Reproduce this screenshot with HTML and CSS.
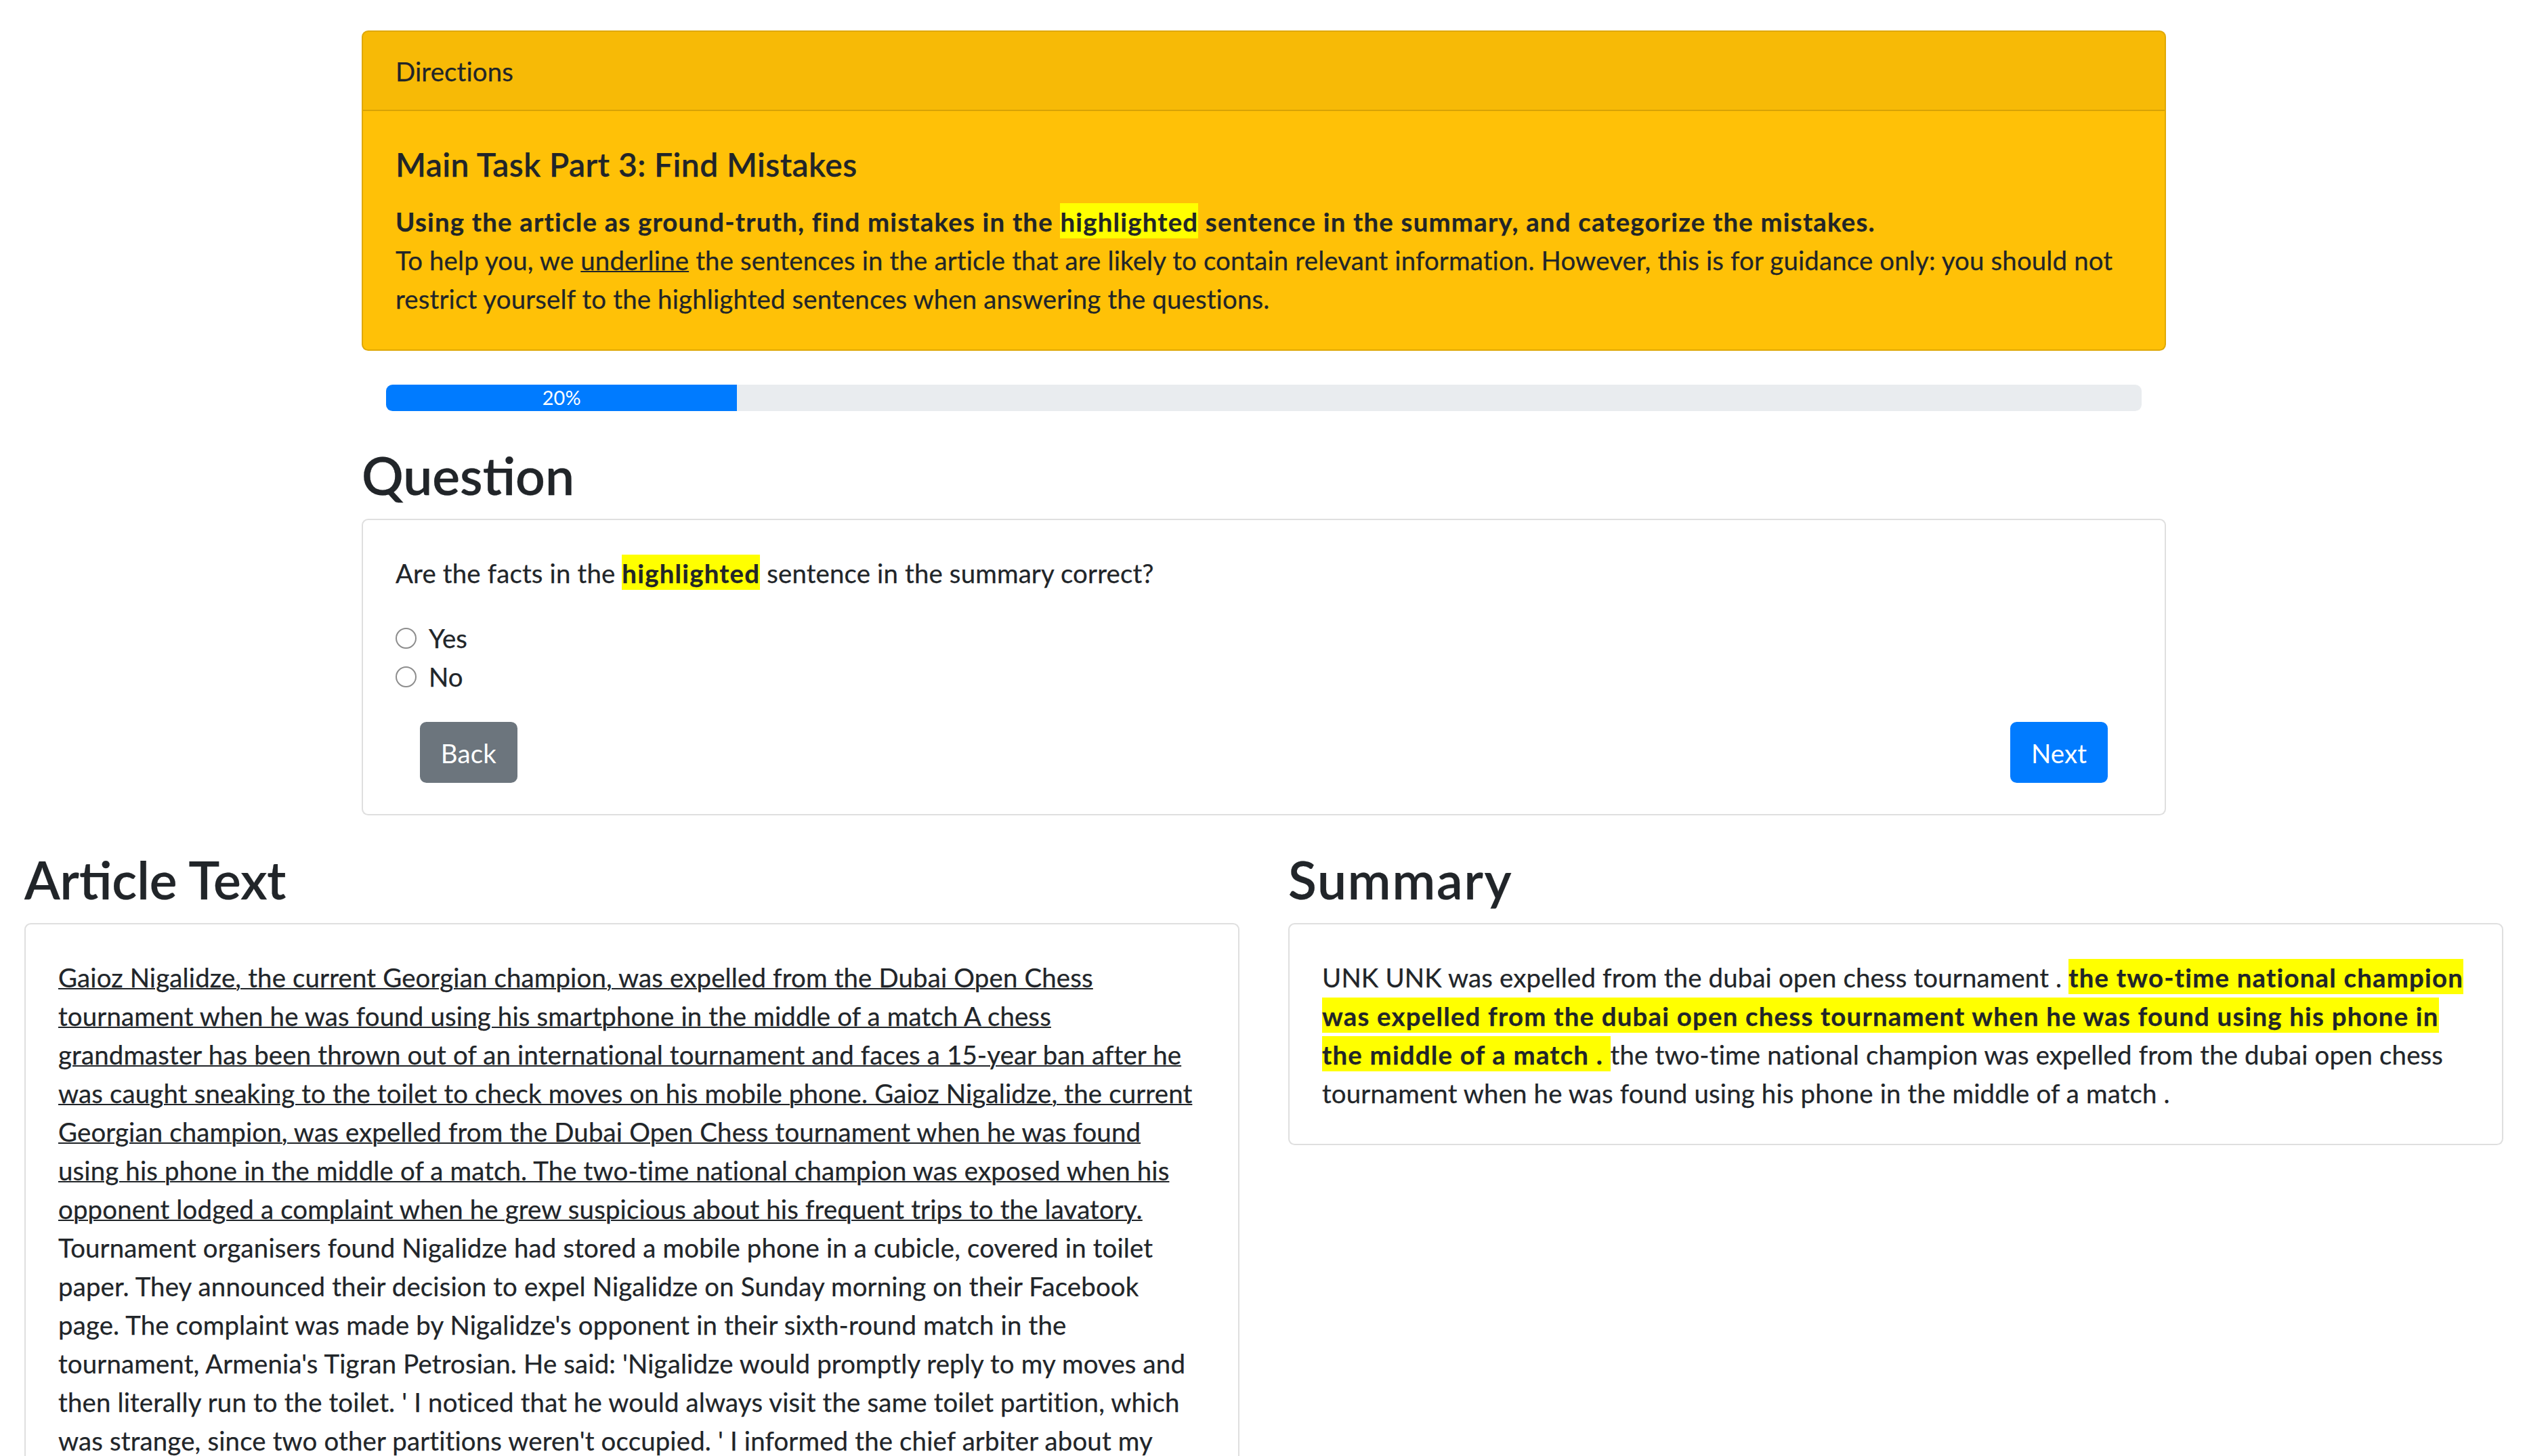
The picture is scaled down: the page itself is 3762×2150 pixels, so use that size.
FILE: index.html
```html
<!DOCTYPE html>
<html lang="en">
<head>
<meta charset="utf-8">
<title>Main Task Part 3: Find Mistakes</title>
<link rel="stylesheet" href="styles.css">
</head>
<body>
<div class="page">
  <div class="container">
    <div class="card card-warning">
      <div class="card-header">Directions</div>
      <div class="card-body">
        <h5 class="card-title">Main Task Part 3: Find Mistakes</h5>
        <p class="lead-bold">Using the article as ground-truth, find mistakes in the <span class="hl">highlighted</span> sentence in the summary, and categorize the mistakes.</p>
        <p class="nowrap">To help you, we <span class="u">underline</span> the sentences in the article that are likely to contain relevant information. However, this is for guidance only: you should not<br>restrict yourself to the highlighted sentences when answering the questions.</p>
      </div>
    </div>

    <div class="progress">
      <div class="progress-bar" style="width: 20%">20%</div>
    </div>

    <h2>Question</h2>
    <div class="card">
      <div class="card-body">
        <p class="q-text">Are the facts in the <span class="hl">highlighted</span> sentence in the summary correct?</p>
        <div class="options">
          <label class="form-check"><input class="radio" type="radio" name="answer" value="yes"><span>Yes</span></label>
          <label class="form-check"><input class="radio" type="radio" name="answer" value="no"><span>No</span></label>
        </div>
        <div class="actions">
          <button class="btn btn-secondary" type="button">Back</button>
          <button class="btn btn-primary" type="button">Next</button>
        </div>
      </div>
    </div>
  </div>

  <div class="panels">
    <section class="panel">
      <h2>Article Text</h2>
      <div class="card">
        <div class="card-body">
          <p class="nowrap"><span class="u">Gaioz Nigalidze, the current Georgian champion, was expelled from the Dubai Open Chess<br>tournament when he was found using his smartphone in the middle of a match A chess<br>grandmaster has been thrown out of an international tournament and faces a 15-year ban after he<br>was caught sneaking to the toilet to check moves on his mobile phone. Gaioz Nigalidze, the current<br>Georgian champion, was expelled from the Dubai Open Chess tournament when he was found<br>using his phone in the middle of a match. The two-time national champion was exposed when his<br>opponent lodged a complaint when he grew suspicious about his frequent trips to the lavatory.</span><br>Tournament organisers found Nigalidze had stored a mobile phone in a cubicle, covered in toilet<br>paper. They announced their decision to expel Nigalidze on Sunday morning on their Facebook<br>page. The complaint was made by Nigalidze's opponent in their sixth-round match in the<br>tournament, Armenia's Tigran Petrosian. He said: 'Nigalidze would promptly reply to my moves and<br>then literally run to the toilet. ' I noticed that he would always visit the same toilet partition, which<br>was strange, since two other partitions weren't occupied. ' I informed the chief arbiter about my</p>
        </div>
      </div>
    </section>
    <section class="panel">
      <h2 class="wide">Summary</h2>
      <div class="card">
        <div class="card-body">
          <p class="nowrap">UNK UNK was expelled from the dubai open chess tournament . <span class="hl">the two-time national champion<br>was expelled from the dubai open chess tournament when he was found using his phone in<br>the middle of a match . </span>the two-time national champion was expelled from the dubai open chess<br>tournament when he was found using his phone in the middle of a match .</p>
        </div>
      </div>
    </section>
  </div>
</div>
</body>
</html>
```
FILE: styles.css
```css
* {
  box-sizing: border-box;
}

html {
  overflow: hidden;
}

body {
  margin: 0;
  font-family: Lato, "Noto Sans", "Liberation Sans", sans-serif;
  font-size: 38.4px;
  line-height: 57px;
  letter-spacing: 0.15px;
  color: #212529;
  background: #fff;
  -webkit-text-stroke: 0.25px #212529;
}

.page {
  width: 3732px;
}

.container {
  max-width: 2736px;
  margin: 0 auto;
  padding: 45px 36px 0;
}

p {
  margin: 0;
}

.nowrap {
  white-space: nowrap;
}

.card {
  border: 2px solid rgba(0, 0, 0, 0.125);
  border-radius: 9.6px;
  background: #fff;
}

.card-warning {
  background: #ffc107;
  margin-bottom: 50px;
}

.card-header {
  padding: 30px 48px 27.6px;
  background: rgba(0, 0, 0, 0.03);
  border-bottom: 2px solid rgba(0, 0, 0, 0.125);
  border-radius: 7.6px 7.6px 0 0;
}

.card-body {
  padding: 50px 48px 46px;
}

.card-title {
  margin: 0 0 28.8px;
  font-size: 48px;
  line-height: 57px;
  font-weight: 600;
  letter-spacing: 0.4px;
}

.lead-bold {
  font-weight: 700;
  letter-spacing: 1.2px;
}

.hl {
  background: #ffff00;
  font-weight: 700;
  letter-spacing: 1.2px;
  padding: 4px 0 2px;
}

.u {
  text-decoration: underline;
  text-decoration-thickness: 2px;
}

.progress {
  display: flex;
  height: 38.4px;
  margin: 0 36px 48px;
  background: #e9ecef;
  border-radius: 9.6px;
  overflow: hidden;
  font-size: 28.8px;
  line-height: 38.4px;
}

.progress-bar {
  display: flex;
  justify-content: center;
  align-items: center;
  color: #fff;
  background: #007bff;
  -webkit-text-stroke: 0;
}

h2 {
  margin: 0 0 19.2px;
  font-size: 76.8px;
  line-height: 92.16px;
  font-weight: 600;
  letter-spacing: 0;
}

h2.wide {
  letter-spacing: 1.8px;
}

.q-text {
  margin-bottom: 38.4px;
}

.options {
  margin-bottom: 38.4px;
}

.form-check {
  display: flex;
  align-items: center;
  gap: 18px;
}

.radio {
  appearance: none;
  -webkit-appearance: none;
  width: 31px;
  height: 31px;
  margin: 0;
  border: 2px solid #8d8d8d;
  border-radius: 50%;
  background: #fff;
}

.actions {
  display: flex;
  justify-content: space-between;
  padding: 0 36px;
}

.btn {
  font: inherit;
  letter-spacing: inherit;
  padding: 15.6px 28.8px 13.2px;
  border: 2.4px solid transparent;
  border-radius: 9.6px;
  color: #fff;
  -webkit-text-stroke: 0;
  cursor: pointer;
}

.btn-secondary {
  background: #6c757d;
  border-color: #6c757d;
}

.btn-primary {
  background: #007bff;
  border-color: #007bff;
}

.panels {
  display: flex;
  padding-top: 48px;
}

.panel {
  flex: 1 1 50%;
  min-width: 0;
  padding: 0 36px;
}
```
